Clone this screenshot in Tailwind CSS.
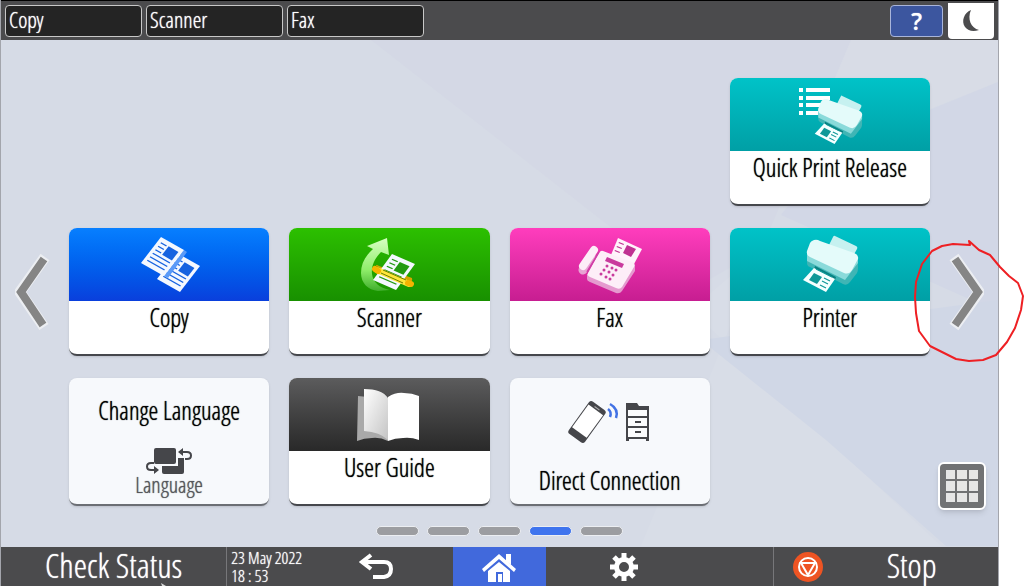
<!DOCTYPE html>
<html lang="en">
<head>
    <meta charset="UTF-8">
    <meta name="viewport" content="width=device-width, initial-scale=1.0">
    <title>Home</title>
    <script src="https://cdn.jsdelivr.net/npm/@tailwindcss/browser@4"></script>
</head>
<body class="bg-white font-['Open_Sans_Condensed_Light','Roboto_Condensed','Liberation_Sans_Narrow','Liberation_Sans',sans-serif] text-black [text-shadow:0_0_1px_currentColor] [&_button]:[text-shadow:0_0_1px_currentColor]">

    <!-- shared icon shapes -->
    <svg class="absolute h-0 w-0">
        <defs>
            <linearGradient id="arrowFill" x1="0" y1="0" x2="0" y2="1">
                <stop offset="0" stop-color="#d9ffc4" /><stop offset=".6" stop-color="#8fee6a" /><stop offset="1" stop-color="#3fae2c" />
            </linearGradient>
            <linearGradient id="pageFill" x1="0" y1="0" x2="1" y2="1">
                <stop offset="0" stop-color="#fff" /><stop offset="1" stop-color="#c4c4c4" />
            </linearGradient>
        </defs>
        <symbol id="doc" viewBox="0 0 20 26" overflow="visible">
            <rect width="20" height="26" fill="#f4f8ff" />
            <path d="M2.5 4h5M2.5 7.500h5M2.500 11h5M2.500 14.500h15M2.500 18h15M2.500 21.500h15" stroke="currentColor" stroke-width="1" />
            <rect x="9" y="3.500" width="8.500" height="8.500" fill="currentColor" />
        </symbol>
        <symbol id="printer" viewBox="0 0 200 73" overflow="visible">
            <path d="M105 8l21 10q2 1 1 3l-5 9-24-11 5-10q1-2 2-1z" fill="#c6f1f0" />
            <path d="M77 22v13q0 3 3 4l33 17q4 2 7-2l7-9q1-2 1-5V30z" fill="#3fb5b5" />
            <path d="M77 26v7l38 19 13-17v-4z" fill="#8adada" />
            <path d="M84 12q3-1 6 1l34 12q5 2 4 6l-6 11q-3 5-8 3L80 29q-4-2-3-6l3-8q1-2 4-3z" fill="#e4fbfa" />
            <path d="M85 38l21 11-1 3-21-11z" fill="#087f80" />
            <path d="M84 40l21 11-9 13-23-12z" fill="#f5ffff" />
            <path d="M84 45l8 4-5 7-8-4z" fill="#0f9898" />
            <path d="M94 50l6 3M92 53l6 3M90 57l6 3M86 41l16 8" stroke="#0f9898" stroke-width="1.200" />
        </symbol>
    </svg>

    <div class="relative mr-[25px] flex min-h-screen flex-col overflow-hidden border-x border-[#a3a5ac] bg-[#d6dbe6]">
        <header class="z-10 flex h-10 items-center gap-1 border-t border-black bg-[#4b4b4d] px-1 text-[22px] leading-none text-white">
            <button class="h-8 w-[137px] rounded border border-[#c8c8c8] bg-[#242424] px-[3px] pb-1 text-left">Copy</button>
            <button class="h-8 w-[137px] rounded border border-[#c8c8c8] bg-[#242424] px-[3px] pb-1 text-left">Scanner</button>
            <button class="h-8 w-[137px] rounded border border-[#c8c8c8] bg-[#242424] px-[3px] pb-1 text-left">Fax</button>
            <button class="ml-auto h-8 w-[53px] rounded border border-[#a9b5da] bg-[#3c569f] font-['Noto_Sans',sans-serif] text-2xl leading-none font-medium" aria-label="Help">?</button>
            <button class="ml-px flex h-9 w-[46px] items-center justify-center rounded-b bg-white" aria-label="Energy saver">
                <svg class="h-6 w-6" viewBox="0 0 24 24" fill="#4b4b4d"><path d="M12 1C5 4 2 12 6 18q5 6 14 3C12 19 8 10 12 1z" /></svg>
            </button>
        </header>

        <!-- backdrop facets -->
        <svg class="absolute inset-0 h-full w-full" viewBox="0 0 997 586" preserveAspectRatio="none">
            <path d="M370 40h480L760 250 690 290z" fill="#d4d8e5" />
            <path d="M850 40h147v42L800 160z" fill="#d8dce6" />
            <path d="M997 82v230L780 215 830 150z" fill="#d2d7e6" />
            <path d="M760 250L640 546h300L690 310z" fill="#d8dde7" />
            <path d="M700 340l125 100 120 106h52V300z" fill="#d0d7e6" />
        </svg>

        <main class="relative flex flex-1 flex-col pt-[38px]">
            <div class="grid grid-cols-[68px_1fr_68px]">
                <button class="flex items-center justify-center" aria-label="Previous page">
                    <svg class="h-20 w-10" viewBox="0 0 40 80" fill="none" stroke-linejoin="miter">
                        <path d="M30 5L5 40l24 35" stroke="#eceef2" stroke-width="11" />
                        <path d="M29 7L6 40l22 33" stroke="#858585" stroke-width="8" />
                    </svg>
                </button>

                <div class="grid grid-cols-4 grid-rows-[128px_128px_128px] gap-x-5 gap-y-[22px] text-[25px] leading-8">
                    <button class="col-start-4 flex flex-col overflow-hidden rounded-lg border-b-2 border-[#45474c] bg-white shadow">
                        <span class="block h-[73px] w-full bg-linear-to-b from-[#00c3c8] to-[#009fa5]">
                            <svg class="mx-auto h-[73px] w-[200px]" viewBox="0 0 200 73">
                                <path d="M69 10h4v4h-4zM76 10h24v4H76zM69 18h4v4h-4zM76 18h24v4H76zM69 25h4v4h-4zM76 25h20v4H76zM69 33h4v4h-4zM76 33h16v4H76z" fill="#fff" />
                                <g transform="translate(22 11) scale(.86)"><use href="#printer" width="200" height="73" /></g>
                            </svg>
                        </span>
                        <span class="w-full text-center">Quick Print Release</span>
                    </button>

                    <button class="col-start-1 flex flex-col overflow-hidden rounded-lg border-b-2 border-[#45474c] bg-white shadow">
                        <span class="block h-[73px] w-full bg-linear-to-b from-[#087fff] to-[#0a3fdc]">
                            <svg class="mx-auto h-[73px] w-[200px] text-[#1763e0]" viewBox="0 0 200 73">
                                <g transform="matrix(1.150 .650 -.770 1 108 25)"><use href="#doc" width="20" height="26" /></g>
                                <path d="M115 22l3 2-19 26-4-2z" fill="#5a9af8" />
                                <g transform="matrix(1.150 .650 -.770 1 92 9)"><use href="#doc" width="20" height="26" /></g>
                            </svg>
                        </span>
                        <span class="w-full text-center">Copy</span>
                    </button>

                    <button class="flex flex-col overflow-hidden rounded-lg border-b-2 border-[#45474c] bg-white shadow">
                        <span class="block h-[73px] w-full bg-linear-to-b from-[#2cc000] to-[#189000]">
                            <svg class="mx-auto h-[73px] w-[200px] text-[#229a12]" viewBox="0 0 200 73">
                                <path d="M98 10L78 18l6 3C76 28 72 36 72 45c0 10 7 17 17 18l12-1C90 60 84 54 83 46c-1-8 3-16 9-22l8 3z" fill="url(#arrowFill)" />
                                <path d="M87 38l33 17q4-1 3-5L90 38q-3-2-3 0z" fill="#d6a400" />
                                <g transform="matrix(1.150 .500 -.730 1 103 26)"><use href="#doc" width="20" height="26" /></g>
                                <path d="M88 42l32 14" stroke="#ffe63a" stroke-width="6" stroke-linecap="round" />
                                <path d="M94 42l23 10M92 45l22 10" stroke="#6b7d00" stroke-width="1" />
                                <path d="M86 41l3 2M119 55l3 1" stroke="#f5b400" stroke-width="6" stroke-linecap="round" />
                            </svg>
                        </span>
                        <span class="w-full text-center">Scanner</span>
                    </button>

                    <button class="flex flex-col overflow-hidden rounded-lg border-b-2 border-[#45474c] bg-white shadow">
                        <span class="block h-[73px] w-full bg-linear-to-b from-[#ff3dbd] to-[#c71d91]">
                            <svg class="mx-auto h-[73px] w-[200px]" viewBox="0 0 200 73">
                                <path d="M108 10l24 11-9 17-22-11z" fill="#fff3fb" />
                                <path d="M117 17l9 4-5 8-8-4zM109 14l5 2-.5 1-5-2zM107 18l5 2-.5 1-5-2zM105 22l5 2-.5 1-5-2z" fill="#c03192" />
                                <path d="M81 28L73 42" stroke="#e8a3d3" stroke-width="9" stroke-linecap="round" />
                                <path d="M77 46v5q0 2 3 3l26 11q4 1 6-2l13-20v-6z" fill="#e59acf" />
                                <path d="M84 22L73 38" stroke="#fdeef8" stroke-width="8" stroke-linecap="round" />
                                <path d="M93 23l29 11q4 1 2 5l-12 20q-2 3-6 1L80 49q-3-1-2-4l11-20q2-3 4-2z" fill="#fdeef8" />
                                <path d="M89 24L77 44" stroke="#cf3fa6" stroke-width="1.500" />
                                <path d="M97 29l17 7-2 4-17-7z" fill="#c93a9d" />
                                <path d="M97 38h0M102 40h0M106 42h0M94 42h0M99 44h0M103 47h0M91 46h0M96 49h0M100 51h0" stroke="#c93a9d" stroke-width="3" stroke-linecap="round" />
                            </svg>
                        </span>
                        <span class="w-full text-center">Fax</span>
                    </button>

                    <button class="flex flex-col overflow-hidden rounded-lg border-b-2 border-[#45474c] bg-white shadow">
                        <span class="block h-[73px] w-full bg-linear-to-b from-[#00c3c8] to-[#009fa5]">
                            <svg class="mx-auto h-[73px] w-[200px]" viewBox="0 0 200 73"><use href="#printer" width="200" height="73" /></svg>
                        </span>
                        <span class="w-full text-center">Printer</span>
                    </button>

                    <button class="flex flex-col items-center overflow-hidden rounded-lg border-b-2 border-[#6b6e74] bg-[#f7f9fc] pt-4 shadow">
                        <span>Change Language</span>
                        <svg class="mt-[22px] h-7 w-12 shrink-0" viewBox="0 0 48 28">
                            <path d="M17 10h22v14q0 2-2 2H19q-2 0-2-2z" fill="#45464a" />
                            <path d="M7 0h26v18H7z" fill="#f7f9fc" />
                            <rect x="9" width="22" height="16" rx="2" fill="#45464a" />
                            <path d="M37 4h5q4 0 4 3.500T42 11h-2M9 15H6q-4 0-4 3.500T6 22h4" fill="none" stroke="#45464a" stroke-width="2" />
                            <path d="M33 4l5-4v8zM14 22l-5-4v8z" fill="#45464a" />
                        </svg>
                        <span class="text-[22px] leading-4 text-[#55565a]">Language</span>
                    </button>

                    <button class="flex flex-col overflow-hidden rounded-lg border-b-2 border-[#45474c] bg-white shadow">
                        <span class="block h-[73px] w-full bg-linear-to-b from-[#5c5c5d] to-[#292929]">
                            <svg class="mx-auto h-[73px] w-[200px]" viewBox="0 0 200 73">
                                <path d="M69 18l30 3v42q-8-4-16-3-8 0-15 3z" fill="#a9a9a9" />
                                <path d="M99 19q8-5 16-4 8 0 15 3v44q-8-3-16-2-8 0-15 3z" fill="#fff" />
                                <path d="M75 11q18 0 24 9v42q-8-8-24-9z" fill="url(#pageFill)" />
                            </svg>
                        </span>
                        <span class="w-full text-center">User Guide</span>
                    </button>

                    <button class="flex flex-col items-center overflow-hidden rounded-lg border-b-2 border-[#6b6e74] bg-[#f7f9fc] pt-5 shadow">
                        <svg class="h-[66px] w-[100px] shrink-0" viewBox="0 0 100 66">
                            <g transform="rotate(36 27 24)">
                                <rect x="17" y="4" width="20" height="40" rx="3" fill="#45464a" />
                                <path d="M18 9h18v28H18z" fill="#fff" />
                                <path d="M24 7h6" stroke="#aaa" stroke-width="1" />
                            </g>
                            <path d="M48 11q4 3 2 8M50 6q9 5 6 14" fill="none" stroke="#4272e4" stroke-width="2.500" />
                            <path d="M66 5h11l2 3h10v35h-3v-2H69v2h-3z" fill="#45464a" />
                            <path d="M68 12h19v6H68zM68 20h19v8H68zM68 30h19v9H68z" fill="#fbfcfd" />
                            <path d="M75 24h6M75 34h6" stroke="#45464a" stroke-width="2" />
                        </svg>
                        <span>Direct Connection</span>
                    </button>
                </div>

                <div class="grid grid-rows-[128px_128px_128px] justify-items-center gap-y-[22px] pr-1">
                    <button class="row-start-2 self-center pl-1" aria-label="Next page">
                        <svg class="h-20 w-10" viewBox="0 0 40 80" fill="none">
                            <path d="M10 5l25 35-25 35" stroke="#eceef2" stroke-width="11" />
                            <path d="M11 7l23 33-23 33" stroke="#858585" stroke-width="8" />
                        </svg>
                    </button>
                    <button class="row-start-3 -mb-1 grid h-12 w-12 grid-cols-3 gap-[2px] self-end rounded-md border-2 border-white bg-[#717274] p-[6px] shadow-md" aria-label="All apps">
                        <i class="h-full bg-[#e6e6e6]"></i><i class="h-full bg-[#e6e6e6]"></i><i class="h-full bg-[#e6e6e6]"></i>
                        <i class="h-full bg-[#e6e6e6]"></i><i class="h-full bg-[#e6e6e6]"></i><i class="h-full bg-[#e6e6e6]"></i>
                        <i class="h-full bg-[#e6e6e6]"></i><i class="h-full bg-[#e6e6e6]"></i><i class="h-full bg-[#e6e6e6]"></i>
                    </button>
                </div>
            </div>

            <nav class="mt-5 mb-[11px] flex justify-center gap-2" aria-label="Pages">
                <button class="h-[10px] w-[43px] rounded-full border border-[#eceef2] bg-[#9c9da1]" aria-label="Page 1"></button>
                <button class="h-[10px] w-[43px] rounded-full border border-[#eceef2] bg-[#9c9da1]" aria-label="Page 2"></button>
                <button class="h-[10px] w-[43px] rounded-full border border-[#eceef2] bg-[#9c9da1]" aria-label="Page 3"></button>
                <button class="h-[10px] w-[43px] rounded-full border border-[#eceef2] bg-[#3f74ee]" aria-label="Page 4"></button>
                <button class="h-[10px] w-[43px] rounded-full border border-[#eceef2] bg-[#9c9da1]" aria-label="Page 5"></button>
            </nav>
        </main>

        <footer class="relative grid h-[39px] grid-cols-[226fr_227fr_94fr_227fr_226fr] bg-[#4b4b4d] text-white">
            <button class="pb-1 text-[34px] leading-8">Check Status</button>
            <div class="flex items-center border-l border-[#77777a] pl-1">
                <time class="w-[125px] text-[17px] leading-[18px]">
                    <span class="block">23 May 2022</span>
                    <span class="block">18 : 53</span>
                </time>
                <button aria-label="Back">
                    <svg class="h-7 w-10" viewBox="0 0 40 28" fill="none" stroke="#fff" stroke-width="4"><path d="M6 9h22q7 0 7 7t-7 8H17M15 2L6 9l9 7" /></svg>
                </button>
            </div>
            <button class="flex items-center justify-center bg-[#4169dc]" aria-label="Home">
                <svg class="h-8 w-10" viewBox="0 0 40 32" fill="#fff"><path d="M20 3l17 15-2 3L20 8 5 21l-2-3z" /><path d="M27 3h5v11l-5-4zM20 11l11 9v11h-7V21h-7v10H9V20zM19 23h4v8h-4z" /></svg>
            </button>
            <button class="flex items-center pl-16" aria-label="Settings">
                <svg class="h-7 w-7" viewBox="0 0 28 28" fill="none" stroke="#fff"><circle cx="14" cy="14" r="7.500" stroke-width="5" /><path d="M14 0v5M14 23v5M0 14h5M23 14h5M4 4l4 4M20 20l4 4M24 4l-4 4M8 20l-4 4" stroke-width="5" /></svg>
            </button>
            <button class="flex items-center border-l border-[#77777a] pl-[19px] text-[34px] leading-8">
                <svg class="h-[30px] w-[30px]" viewBox="0 0 30 30" fill="none"><circle cx="15" cy="15" r="15" fill="#ee5423" /><circle cx="15" cy="15" r="9" stroke="#fff" stroke-width="2" /><path d="M8 11h14l-7 12z" stroke="#fff" stroke-width="2" /></svg>
                <span class="ml-16 pb-1">Stop</span>
            </button>
            <!-- pointer tip peeking over the bottom edge -->
            <svg class="absolute bottom-0 left-40 h-[3px] w-2" viewBox="0 0 8 3" fill="#d8d8d8"><path d="M0 0l5 3H1z" /></svg>
        </footer>
    </div>

    <!-- hand-drawn mark round the next arrow -->
    <svg class="pointer-events-none absolute top-[238px] right-0 h-32 w-28" viewBox="912 238 112 128" fill="none" stroke="#ee2024" stroke-width="2" stroke-linejoin="round">
        <path d="M969 241l1 4-17-1-11 2-10 5-10 13-6 18-1 15 1 16 3 18 11 15 14 7 12 6 13 2 14-1 13-5 11-13 8-14 6-18 2-14-5-13-9-7-9-9-10-12-11-5z" />
    </svg>
</body>
</html>
